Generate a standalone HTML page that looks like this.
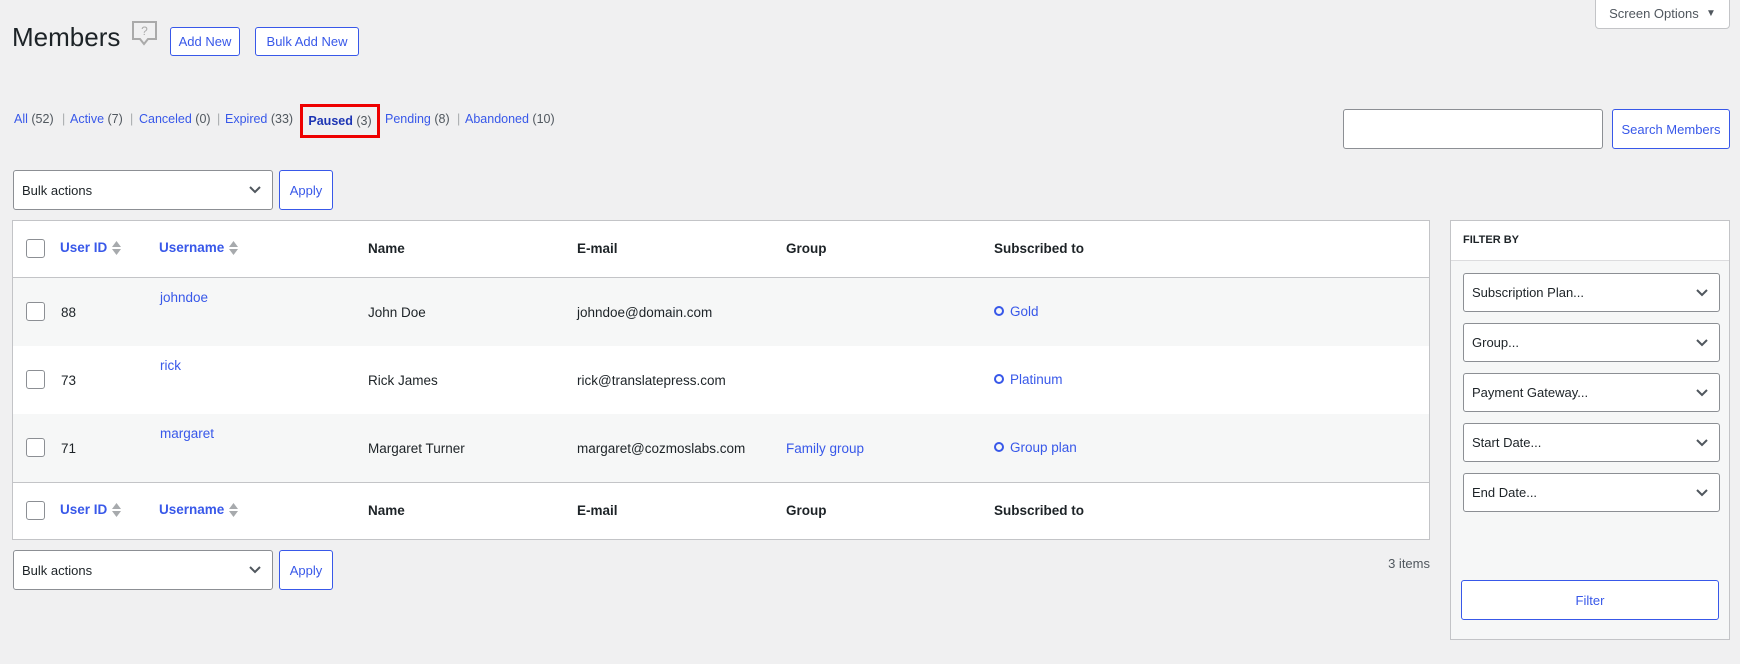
<!DOCTYPE html>
<html><head><meta charset="utf-8"><style>
*{box-sizing:border-box;margin:0;padding:0}
body{width:1740px;height:664px;background:#f0f0f1;font-family:"Liberation Sans",sans-serif;font-size:13.5px;color:#1d2327;position:relative;overflow:hidden}
.a{position:absolute;white-space:nowrap}
a,.l{color:#3858e9;text-decoration:none}
.btn{position:absolute;border:1px solid #3858e9;border-radius:3px;background:#fff;color:#3858e9;display:flex;align-items:center;justify-content:center;font-size:13px}
.sel{position:absolute;border:1px solid #8c8f94;border-radius:3px;background:#fff;display:flex;align-items:center;padding-left:8px;font-size:13px;color:#1d2327}
.sel svg{position:absolute;right:10px;top:50%;margin-top:-5px}
.cb{position:absolute;width:19px;height:19px;border:1px solid #8c8f94;border-radius:3px;background:#fff}
.th{position:absolute;font-weight:bold;font-size:13.5px}
.sort{display:inline-block;vertical-align:middle;margin-left:5px}
.st{position:absolute;top:112px;font-size:12.5px;color:#50575e;white-space:nowrap}
.sep{position:absolute;top:112px;font-size:12.5px;color:#a7aaad}
</style></head><body>
<div class="a" style="left:12px;top:22px;font-size:26px;color:#1d2327">Members</div>
<svg class="a" style="left:131px;top:20px" width="27" height="27" viewBox="0 0 27 27"><path d="M2 2h23v17h-8l-4 5-4-5H2z" fill="none" stroke="#aaa" stroke-width="2"/><text x="13.5" y="15" text-anchor="middle" font-size="12" fill="#aaa" font-family="Liberation Sans">?</text></svg>
<div class="btn" style="left:170px;top:27px;width:70px;height:29px">Add New</div>
<div class="btn" style="left:255px;top:27px;width:104px;height:29px">Bulk Add New</div>
<div class="a" style="left:1595px;top:-2px;width:135px;height:31px;background:#fff;border:1px solid #c3c4c7;border-radius:0 0 4px 4px;color:#50575e;font-size:13px;display:flex;align-items:center;justify-content:center">Screen Options&nbsp;&nbsp;<span style="font-size:10px">▼</span></div>
<div class="st" style="left:14px"><a>All</a> (52)</div>
<div class="sep" style="left:62px">|</div>
<div class="st" style="left:70px"><a>Active</a> (7)</div>
<div class="sep" style="left:130px">|</div>
<div class="st" style="left:139px"><a>Canceled</a> (0)</div>
<div class="sep" style="left:217px">|</div>
<div class="st" style="left:225px"><a>Expired</a> (33)</div>
<div class="a" style="left:300px;top:104px;width:80px;height:34px;border:3px solid #e00;display:flex;align-items:center;justify-content:center;font-size:12.5px;color:#50575e"><b style="color:#1d35b4">Paused</b>&nbsp;(3)</div>
<div class="st" style="left:385px"><a>Pending</a> (8)</div>
<div class="sep" style="left:457px">|</div>
<div class="st" style="left:465px"><a>Abandoned</a> (10)</div>
<div class="a" style="left:1343px;top:109px;width:260px;height:40px;background:#fff;border:1px solid #8c8f94;border-radius:3px"></div>
<div class="btn" style="left:1612px;top:109px;width:118px;height:40px">Search Members</div>
<div class="sel" style="left:13px;top:170px;width:260px;height:40px">Bulk actions<svg width="14" height="10"><path d="M2 2l5 5 5-5" fill="none" stroke="#50575e" stroke-width="2"/></svg></div>
<div class="btn" style="left:279px;top:170px;width:54px;height:40px">Apply</div>
<div class="a" style="left:12px;top:220px;width:1418px;height:320px;background:#fff;border:1px solid #c3c4c7"></div>
<div class="a" style="left:13px;top:277px;width:1416px;height:1px;background:#c3c4c7"></div>
<div class="a" style="left:13px;top:278px;width:1416px;height:68px;background:#f6f7f7"></div>
<div class="a" style="left:13px;top:414px;width:1416px;height:68px;background:#f6f7f7"></div>
<div class="a" style="left:13px;top:482px;width:1416px;height:1px;background:#c3c4c7"></div>
<div class="cb" style="left:26px;top:239px"></div>
<div class="th l" style="left:60px;top:240px">User ID<svg class="sort" width="9" height="14"><path d="M0 6L4.5 0 9 6zM0 8l4.5 6L9 8z" fill="#a7aaad"/></svg></div>
<div class="th l" style="left:159px;top:240px">Username<svg class="sort" width="9" height="14"><path d="M0 6L4.5 0 9 6zM0 8l4.5 6L9 8z" fill="#a7aaad"/></svg></div>
<div class="th" style="left:368px;top:241px">Name</div>
<div class="th" style="left:577px;top:241px">E-mail</div>
<div class="th" style="left:786px;top:241px">Group</div>
<div class="th" style="left:994px;top:241px">Subscribed to</div>

<div class="cb" style="left:26px;top:501px"></div>
<div class="th l" style="left:60px;top:502px">User ID<svg class="sort" width="9" height="14"><path d="M0 6L4.5 0 9 6zM0 8l4.5 6L9 8z" fill="#a7aaad"/></svg></div>
<div class="th l" style="left:159px;top:502px">Username<svg class="sort" width="9" height="14"><path d="M0 6L4.5 0 9 6zM0 8l4.5 6L9 8z" fill="#a7aaad"/></svg></div>
<div class="th" style="left:368px;top:503px">Name</div>
<div class="th" style="left:577px;top:503px">E-mail</div>
<div class="th" style="left:786px;top:503px">Group</div>
<div class="th" style="left:994px;top:503px">Subscribed to</div>

<div class="cb" style="left:26px;top:302px"></div>
<div class="a" style="left:61px;top:305px">88</div>
<div class="a l" style="left:160px;top:290px">johndoe</div>
<div class="a" style="left:368px;top:305px">John Doe</div>
<div class="a" style="left:577px;top:305px">johndoe@domain.com</div>
<div class="a l" style="left:994px;top:304px"><span style="display:inline-block;width:10px;height:10px;border:2px solid #3858e9;border-radius:50%;margin-right:6px"></span>Gold</div>

<div class="cb" style="left:26px;top:370px"></div>
<div class="a" style="left:61px;top:373px">73</div>
<div class="a l" style="left:160px;top:358px">rick</div>
<div class="a" style="left:368px;top:373px">Rick James</div>
<div class="a" style="left:577px;top:373px">rick@translatepress.com</div>
<div class="a l" style="left:994px;top:372px"><span style="display:inline-block;width:10px;height:10px;border:2px solid #3858e9;border-radius:50%;margin-right:6px"></span>Platinum</div>

<div class="cb" style="left:26px;top:438px"></div>
<div class="a" style="left:61px;top:441px">71</div>
<div class="a l" style="left:160px;top:426px">margaret</div>
<div class="a" style="left:368px;top:441px">Margaret Turner</div>
<div class="a" style="left:577px;top:441px">margaret@cozmoslabs.com</div>
<div class="a l" style="left:786px;top:441px">Family group</div>
<div class="a l" style="left:994px;top:440px"><span style="display:inline-block;width:10px;height:10px;border:2px solid #3858e9;border-radius:50%;margin-right:6px"></span>Group plan</div>

<div class="sel" style="left:13px;top:550px;width:260px;height:40px">Bulk actions<svg width="14" height="10"><path d="M2 2l5 5 5-5" fill="none" stroke="#50575e" stroke-width="2"/></svg></div>
<div class="btn" style="left:279px;top:550px;width:54px;height:40px">Apply</div>
<div class="a" style="left:1360px;top:556px;width:70px;text-align:right;color:#50575e;font-size:13px">3 items</div>
<div class="a" style="left:1450px;top:220px;width:280px;height:420px;background:#f6f7f7;border:1px solid #c3c4c7"></div>
<div class="a" style="left:1451px;top:221px;width:278px;height:40px;background:#fff;border-bottom:1px solid #dcdcde"></div>
<div class="a" style="left:1463px;top:234px;font-size:11px;font-weight:bold">FILTER BY</div>
<div class="sel" style="left:1463px;top:273px;width:257px;height:39px">Subscription Plan...<svg width="14" height="10"><path d="M2 2l5 5 5-5" fill="none" stroke="#50575e" stroke-width="2"/></svg></div>
<div class="sel" style="left:1463px;top:323px;width:257px;height:39px">Group...<svg width="14" height="10"><path d="M2 2l5 5 5-5" fill="none" stroke="#50575e" stroke-width="2"/></svg></div>
<div class="sel" style="left:1463px;top:373px;width:257px;height:39px">Payment Gateway...<svg width="14" height="10"><path d="M2 2l5 5 5-5" fill="none" stroke="#50575e" stroke-width="2"/></svg></div>
<div class="sel" style="left:1463px;top:423px;width:257px;height:39px">Start Date...<svg width="14" height="10"><path d="M2 2l5 5 5-5" fill="none" stroke="#50575e" stroke-width="2"/></svg></div>
<div class="sel" style="left:1463px;top:473px;width:257px;height:39px">End Date...<svg width="14" height="10"><path d="M2 2l5 5 5-5" fill="none" stroke="#50575e" stroke-width="2"/></svg></div>
<div class="btn" style="left:1461px;top:580px;width:258px;height:40px">Filter</div>
</body></html>
